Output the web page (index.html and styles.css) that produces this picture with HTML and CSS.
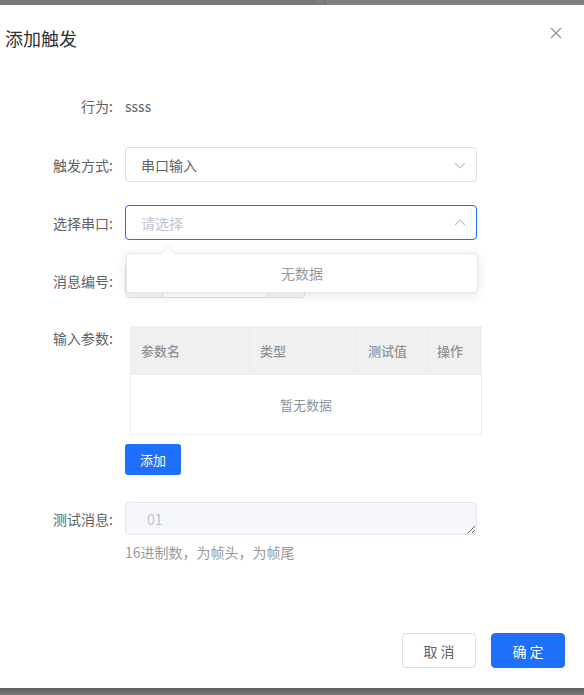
FILE: index.html
```html
<!DOCTYPE html>
<html lang="zh">
<head>
<meta charset="utf-8">
<title>添加触发</title>
<link rel="stylesheet" href="styles.css">
</head>
<body>
<div class="strip-top"><div class="strip-top-left"></div><div class="strip-top-line"></div></div>
<div class="dialog">
  <div class="dlg-head">
    <span class="dlg-title">添加触发</span>
    <svg class="dlg-close" width="12" height="12" viewBox="0 0 12 12"><path d="M1 1L11 11M11 1L1 11" stroke="#909399" stroke-width="1.2" fill="none"/></svg>
  </div>
  <div class="form">
    <div class="row row-text">
      <span class="lbl">行为:</span>
      <span class="val">ssss</span>
    </div>
    <div class="row">
      <span class="lbl">触发方式:</span>
      <div class="field select">
        <span class="sel-text">串口输入</span>
        <svg class="chev" width="12" height="12" viewBox="0 0 12 12"><path d="M1 4L6 9L11 4" stroke="#c0c4cc" stroke-width="1.1" fill="none"/></svg>
      </div>
    </div>
    <div class="row">
      <span class="lbl">选择串口:</span>
      <div class="field select focus">
        <span class="sel-text ph">请选择</span>
        <svg class="chev" width="12" height="12" viewBox="0 0 12 12"><path d="M1 8L6 3L11 8" stroke="#c0c4cc" stroke-width="1.1" fill="none"/></svg>
        <div class="popover">
          <div class="pop-arrow"></div>
          <span class="pop-empty">无数据</span>
        </div>
      </div>
    </div>
    <div class="row row-num">
      <span class="lbl">消息编号:</span>
      <div class="num">
        <span class="num-btn num-dec"></span>
        <span class="num-input"></span>
        <span class="num-btn num-inc"></span>
      </div>
    </div>
    <div class="row row-table">
      <span class="lbl lbl-top">输入参数:</span>
      <div class="table">
        <div class="thead">
          <span class="th c1">参数名</span>
          <span class="th c2">类型</span>
          <span class="th c3">测试值</span>
          <span class="th c4">操作</span>
        </div>
        <div class="tbody">暂无数据</div>
      </div>
    </div>
    <div class="row row-btn">
      <span class="lbl"></span>
      <button class="btn-add" type="button">添加</button>
    </div>
    <div class="row row-area">
      <span class="lbl">测试消息:</span>
      <textarea class="area" disabled placeholder="01"></textarea>
    </div>
    <div class="row row-hint">
      <span class="lbl"></span>
      <span class="hint">16进制数，为帧头，为帧尾</span>
    </div>
  </div>
  <div class="footer">
    <button class="btn btn-cancel" type="button">取 消</button>
    <button class="btn btn-ok" type="button">确 定</button>
  </div>
</div>
<div class="strip-bottom"></div>
</body>
</html>
```

FILE: styles.css
```css
* { box-sizing: border-box; }
html, body { margin: 0; padding: 0; }
body {
  width: 584px;
  height: 695px;
  overflow: hidden;
  font-family: "Noto Sans CJK SC", "Microsoft YaHei", sans-serif;
  font-size: 14px;
  color: #606266;
  background: #7d7d7d;
}
.strip-top {
  height: 5px;
  background: #7f7f7f;
  display: flex;
}
.strip-top-left {
  width: 316px;
  height: 5px;
  background: #777777;
  border-bottom-right-radius: 3px;
}
.strip-top-line {
  margin-left: 8px;
  width: 1px;
  height: 5px;
  background: #6c6c6c;
}
.dialog {
  height: 683px;
  background: #fff;
  display: flex;
  flex-direction: column;
}
.dlg-head {
  padding: 21px 0 0 5px;
  display: flex;
  justify-content: space-between;
  align-items: flex-start;
}
.dlg-title {
  font-size: 18px;
  line-height: 24px;
  color: #303133;
}
.dlg-close {
  margin: 1px 22px 0 0;
}
.form {
  padding-top: 38px;
}
.row {
  display: flex;
  align-items: center;
}
.lbl {
  width: 113px;
  flex: 0 0 113px;
  margin-right: 12px;
  text-align: right;
  line-height: 20px;
  color: #606266;
}
.row-text {
  height: 36px;
  margin-bottom: 23px;
}
.val { line-height: 20px; color: #606266; }
.field {
  position: relative;
  width: 352px;
  height: 35px;
  border: 1px solid #dcdfe6;
  border-radius: 4px;
  display: flex;
  align-items: center;
  padding: 0 10px 0 15px;
  justify-content: space-between;
}
.form > .row:nth-child(2),
.form > .row:nth-child(3) { margin-bottom: 23px; }
.field.focus { border-color: #1d6ffc; }
.sel-text { line-height: 20px; color: #606266; }
.sel-text.ph { color: #c0c4cc; }
.popover {
  position: absolute;
  left: 0;
  top: 47px;
  width: 352px;
  height: 40px;
  background: #fff;
  border: 1px solid #e4e7ed;
  border-radius: 4px;
  box-shadow: 0 2px 12px rgba(0,0,0,0.1);
  display: flex;
  align-items: center;
  justify-content: center;
  z-index: 5;
}
.pop-arrow {
  position: absolute;
  top: -6px;
  left: 36px;
  width: 10px;
  height: 10px;
  background: #fff;
  border-left: 1px solid #ebeef5;
  border-top: 1px solid #ebeef5;
  transform: rotate(45deg);
}
.pop-empty { color: #999; font-size: 14px; line-height: 20px; }
.row-num { height: 35px; margin-bottom: 28px; }
.num {
  width: 180px;
  height: 35px;
  border: 1px solid #dcdfe6;
  border-radius: 4px;
  display: flex;
  overflow: hidden;
}
.num-btn {
  width: 37px;
  background: #f5f7fa;
}
.num-dec { border-right: 1px solid #dcdfe6; }
.num-inc { border-left: 1px solid #dcdfe6; }
.num-input { flex: 1; }
.row-table {
  align-items: flex-start;
  margin-bottom: 9px;
}
.lbl-top { line-height: 24px; }
.table {
  margin-left: 5px;
  width: 352px;
  border: 1px solid #ebeef5;
}
.thead {
  display: flex;
  height: 48px;
  background: #f0f0f0;
  border-bottom: 1px solid #ebeef5;
}
.th {
  display: flex;
  align-items: center;
  padding-left: 10px;
  font-size: 13px;
  font-weight: 500;
  color: #909399;
  border-right: 1px solid #e9ebf0;
}
.c1 { width: 119px; }
.c2 { width: 106px; }
.c3 { width: 73px; padding-left: 12px; }
.c4 { flex: 1; border-right: 0; padding-left: 8px; }
.tbody {
  height: 59px;
  display: flex;
  align-items: center;
  justify-content: center;
  font-size: 13px;
  color: #909399;
}
.row-btn { margin-bottom: 27px; }
.btn-add {
  width: 56px;
  height: 31px;
  border: 0;
  border-radius: 3px;
  background: #1d6ffc;
  color: #fff;
  font-family: inherit;
  font-size: 13px;
  padding: 0;
}
.area {
  width: 352px;
  height: 33px;
  border: 1px solid #e4e7ed;
  border-radius: 4px;
  background: #f5f7fa;
  font-family: inherit;
  font-size: 14px;
  line-height: 20px;
  padding: 6px 15px 5px 21px;
  resize: vertical;
  color: #c0c4cc;
  display: block;
}
.area::placeholder { color: #c0c4cc; }
.row-hint { margin-top: 7px; }
.hint {
  line-height: 20px;
  color: #999999;
}
.footer {
  margin-top: auto;
  padding: 0 19px 20px 0;
  display: flex;
  justify-content: flex-end;
  gap: 15px;
}
.btn {
  width: 74px;
  height: 35px;
  border-radius: 4px;
  font-family: inherit;
  font-size: 14px;
  padding: 0;
}
.btn-cancel {
  background: #fff;
  border: 1px solid #dcdfe6;
  color: #606266;
}
.btn-ok {
  background: #1d6ffc;
  border: 1px solid #1d6ffc;
  color: #fff;
}
.strip-bottom {
  height: 7px;
  background: linear-gradient(#5f5f5f, #7a7a7a);
}
```
